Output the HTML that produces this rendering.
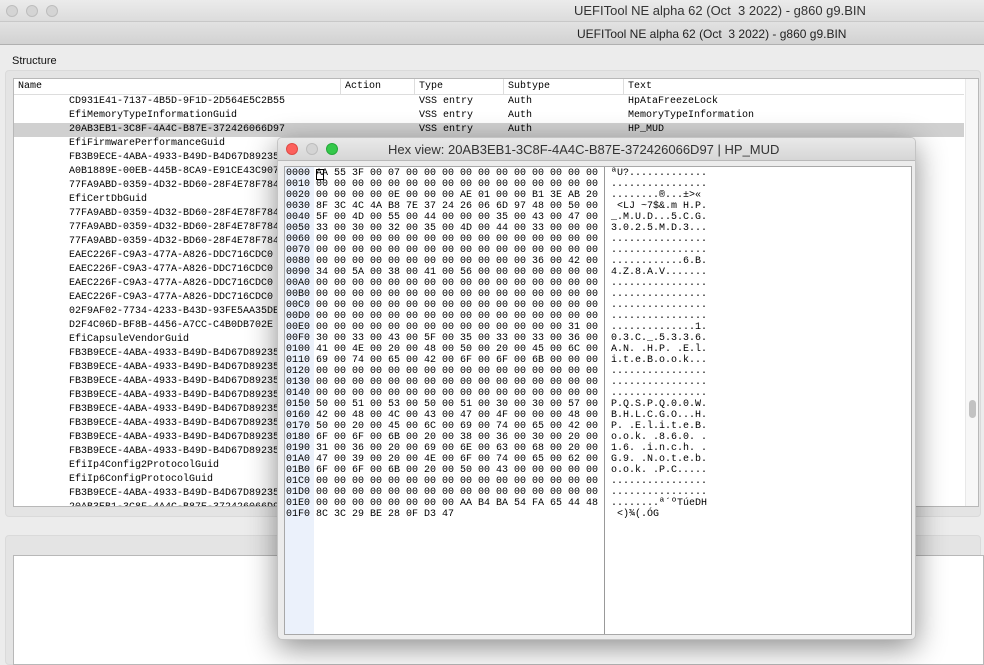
<!DOCTYPE html>
<html><head><meta charset="utf-8"><style>
*{margin:0;padding:0;box-sizing:border-box}
body{width:984px;height:660px;overflow:hidden;background:#ececec;font-family:"Liberation Sans",sans-serif;position:relative}
.abs{position:absolute}
.tl{position:absolute;width:12px;height:12px;border-radius:50%;background:#d4d4d4;border:1px solid #bdbdbd}
.mono{font-family:"Liberation Mono","DejaVu Sans Mono",monospace;font-size:10px;line-height:14px;white-space:pre;color:#000}
.row{position:absolute;left:0;right:0;height:14px}
.row span{position:absolute;top:0}
.hdr span{position:absolute;top:0}
pre{font-family:"Liberation Mono","DejaVu Sans Mono",monospace;font-size:10px;line-height:11px;color:#000;margin:0}
</style></head><body>
<div class="abs" style="left:0;top:0;width:984px;height:22px;background:linear-gradient(#ebebeb,#dcdcdc);border-bottom:1px solid #c8c8c8"></div>
<div class="tl" style="left:6px;top:5px"></div><div class="tl" style="left:26px;top:5px"></div><div class="tl" style="left:46px;top:5px"></div>
<div class="abs" style="left:574px;top:3px;font-size:13px;color:#333">UEFITool NE alpha 62 (Oct&nbsp;&nbsp;3 2022) - g860 g9.BIN</div>
<div class="abs" style="left:0;top:22px;width:984px;height:23px;background:linear-gradient(#e2e2e2,#d2d2d2);border-bottom:1px solid #b0b0b0"></div>
<div class="abs" style="left:577px;top:27px;font-size:12px;color:#222">UEFITool NE alpha 62 (Oct&nbsp;&nbsp;3 2022) - g860 g9.BIN</div>
<div class="abs" style="left:12px;top:55px;font-size:11px;color:#111">Structure</div>
<div class="abs" style="left:5px;top:70px;width:976px;height:447px;background:#e4e4e4;border-radius:4px;border:1px solid #dadada"></div>
<div class="abs" style="left:13px;top:78px;width:966px;height:429px;background:#fff;border:1px solid #b8b8b8;overflow:hidden">
 <div class="mono hdr" style="position:absolute;left:0;top:0;width:950px;height:16px;border-bottom:1px solid #ddd;line-height:15px"><span style="left:4px">Name</span><span style="left:326px;border-left:1px solid #ddd;padding-left:4px">Action</span><span style="left:400px;border-left:1px solid #ddd;padding-left:4px">Type</span><span style="left:489px;border-left:1px solid #ddd;padding-left:4px">Subtype</span><span style="left:609px;border-left:1px solid #ddd;padding-left:4px">Text</span></div>
 <div class="mono" style="position:absolute;left:0;top:16px;width:950px">
  <div class="row" style="top:0"><span style="left:55px">CD931E41-7137-4B5D-9F1D-2D564E5C2B55</span><span style="left:405px">VSS entry</span><span style="left:494px">Auth</span><span style="left:614px">HpAtaFreezeLock</span></div>
  <div class="row" style="top:14px"><span style="left:55px">EfiMemoryTypeInformationGuid</span><span style="left:405px">VSS entry</span><span style="left:494px">Auth</span><span style="left:614px">MemoryTypeInformation</span></div>
  <div class="row" style="top:28px;background:#d0d0d0"><span style="left:55px">20AB3EB1-3C8F-4A4C-B87E-372426066D97</span><span style="left:405px">VSS entry</span><span style="left:494px">Auth</span><span style="left:614px">HP_MUD</span></div>
  <div class="row" style="top:42px"><span style="left:55px">EfiFirmwarePerformanceGuid</span></div>
  <div class="row" style="top:56px"><span style="left:55px">FB3B9ECE-4ABA-4933-B49D-B4D67D89235</span></div>
  <div class="row" style="top:70px"><span style="left:55px">A0B1889E-00EB-445B-8CA9-E91CE43C907</span></div>
  <div class="row" style="top:84px"><span style="left:55px">77FA9ABD-0359-4D32-BD60-28F4E78F784</span></div>
  <div class="row" style="top:98px"><span style="left:55px">EfiCertDbGuid</span></div>
  <div class="row" style="top:112px"><span style="left:55px">77FA9ABD-0359-4D32-BD60-28F4E78F784</span></div>
  <div class="row" style="top:126px"><span style="left:55px">77FA9ABD-0359-4D32-BD60-28F4E78F784</span></div>
  <div class="row" style="top:140px"><span style="left:55px">77FA9ABD-0359-4D32-BD60-28F4E78F784</span></div>
  <div class="row" style="top:154px"><span style="left:55px">EAEC226F-C9A3-477A-A826-DDC716CDC0</span></div>
  <div class="row" style="top:168px"><span style="left:55px">EAEC226F-C9A3-477A-A826-DDC716CDC0</span></div>
  <div class="row" style="top:182px"><span style="left:55px">EAEC226F-C9A3-477A-A826-DDC716CDC0</span></div>
  <div class="row" style="top:196px"><span style="left:55px">EAEC226F-C9A3-477A-A826-DDC716CDC0</span></div>
  <div class="row" style="top:210px"><span style="left:55px">02F9AF02-7734-4233-B43D-93FE5AA35DE</span></div>
  <div class="row" style="top:224px"><span style="left:55px">D2F4C06D-BF8B-4456-A7CC-C4B0DB702E</span></div>
  <div class="row" style="top:238px"><span style="left:55px">EfiCapsuleVendorGuid</span></div>
  <div class="row" style="top:252px"><span style="left:55px">FB3B9ECE-4ABA-4933-B49D-B4D67D89235</span></div>
  <div class="row" style="top:266px"><span style="left:55px">FB3B9ECE-4ABA-4933-B49D-B4D67D89235</span></div>
  <div class="row" style="top:280px"><span style="left:55px">FB3B9ECE-4ABA-4933-B49D-B4D67D89235</span></div>
  <div class="row" style="top:294px"><span style="left:55px">FB3B9ECE-4ABA-4933-B49D-B4D67D89235</span></div>
  <div class="row" style="top:308px"><span style="left:55px">FB3B9ECE-4ABA-4933-B49D-B4D67D89235</span></div>
  <div class="row" style="top:322px"><span style="left:55px">FB3B9ECE-4ABA-4933-B49D-B4D67D89235</span></div>
  <div class="row" style="top:336px"><span style="left:55px">FB3B9ECE-4ABA-4933-B49D-B4D67D89235</span></div>
  <div class="row" style="top:350px"><span style="left:55px">FB3B9ECE-4ABA-4933-B49D-B4D67D89235</span></div>
  <div class="row" style="top:364px"><span style="left:55px">EfiIp4Config2ProtocolGuid</span></div>
  <div class="row" style="top:378px"><span style="left:55px">EfiIp6ConfigProtocolGuid</span></div>
  <div class="row" style="top:392px"><span style="left:55px">FB3B9ECE-4ABA-4933-B49D-B4D67D89235</span></div>
  <div class="row" style="top:406px"><span style="left:55px">20AB3EB1-3C8F-4A4C-B87E-372426066D97</span></div>
 </div>
 <div class="abs" style="left:951px;top:0;width:14px;height:429px;background:#f7f7f7;border-left:1px solid #e8e8e8"></div>
 <div class="abs" style="left:955px;top:321px;width:7px;height:18px;border-radius:4px;background:#c2c2c2"></div>
</div>
<div class="abs" style="left:5px;top:535px;width:976px;height:130px;background:#e4e4e4;border-radius:4px;border:1px solid #dadada"></div>
<div class="abs" style="left:13px;top:555px;width:971px;height:110px;background:#fff;border:1px solid #b8b8b8"></div>

<!-- Hex window -->
<div class="abs" style="left:277px;top:137px;width:639px;height:503px;background:#ececec;border:1px solid #c4c4c4;border-radius:5px;box-shadow:0 8px 30px rgba(0,0,0,0.45);overflow:hidden">
 <div class="abs" style="left:0;top:0;width:639px;height:23px;background:linear-gradient(#e9e9e9,#d6d6d6);border-bottom:1px solid #b9b9b9"></div>
 <div class="tl" style="left:8px;top:5px;background:#fc605c;border-color:#de4a45"></div>
 <div class="tl" style="left:28px;top:5px"></div>
 <div class="tl" style="left:48px;top:5px;background:#34c84a;border-color:#25a83a"></div>
 <div class="abs" style="left:110px;top:4px;font-size:13px;color:#333">Hex view: 20AB3EB1-3C8F-4A4C-B87E-372426066D97 | HP_MUD</div>
 <div class="abs" style="left:6px;top:28px;width:628px;height:469px;background:#fff;border:1px solid #a8a8a8"></div>
 <div class="abs" style="left:7px;top:29px;width:29px;height:467px;background:#ebf1fb"></div>
 <div class="abs" style="left:326px;top:29px;width:1px;height:467px;background:#999"></div>
 <div class="abs" style="left:38px;top:31px;width:8px;height:11px;border:1px solid #000"></div>
<pre class="abs" style="left:8px;top:30px">0000 AA 55 3F 00 07 00 00 00 00 00 00 00 00 00 00 00
0010 00 00 00 00 00 00 00 00 00 00 00 00 00 00 00 00
0020 00 00 00 00 0E 00 00 00 AE 01 00 00 B1 3E AB 20
0030 8F 3C 4C 4A B8 7E 37 24 26 06 6D 97 48 00 50 00
0040 5F 00 4D 00 55 00 44 00 00 00 35 00 43 00 47 00
0050 33 00 30 00 32 00 35 00 4D 00 44 00 33 00 00 00
0060 00 00 00 00 00 00 00 00 00 00 00 00 00 00 00 00
0070 00 00 00 00 00 00 00 00 00 00 00 00 00 00 00 00
0080 00 00 00 00 00 00 00 00 00 00 00 00 36 00 42 00
0090 34 00 5A 00 38 00 41 00 56 00 00 00 00 00 00 00
00A0 00 00 00 00 00 00 00 00 00 00 00 00 00 00 00 00
00B0 00 00 00 00 00 00 00 00 00 00 00 00 00 00 00 00
00C0 00 00 00 00 00 00 00 00 00 00 00 00 00 00 00 00
00D0 00 00 00 00 00 00 00 00 00 00 00 00 00 00 00 00
00E0 00 00 00 00 00 00 00 00 00 00 00 00 00 00 31 00
00F0 30 00 33 00 43 00 5F 00 35 00 33 00 33 00 36 00
0100 41 00 4E 00 20 00 48 00 50 00 20 00 45 00 6C 00
0110 69 00 74 00 65 00 42 00 6F 00 6F 00 6B 00 00 00
0120 00 00 00 00 00 00 00 00 00 00 00 00 00 00 00 00
0130 00 00 00 00 00 00 00 00 00 00 00 00 00 00 00 00
0140 00 00 00 00 00 00 00 00 00 00 00 00 00 00 00 00
0150 50 00 51 00 53 00 50 00 51 00 30 00 30 00 57 00
0160 42 00 48 00 4C 00 43 00 47 00 4F 00 00 00 48 00
0170 50 00 20 00 45 00 6C 00 69 00 74 00 65 00 42 00
0180 6F 00 6F 00 6B 00 20 00 38 00 36 00 30 00 20 00
0190 31 00 36 00 20 00 69 00 6E 00 63 00 68 00 20 00
01A0 47 00 39 00 20 00 4E 00 6F 00 74 00 65 00 62 00
01B0 6F 00 6F 00 6B 00 20 00 50 00 43 00 00 00 00 00
01C0 00 00 00 00 00 00 00 00 00 00 00 00 00 00 00 00
01D0 00 00 00 00 00 00 00 00 00 00 00 00 00 00 00 00
01E0 00 00 00 00 00 00 00 00 AA B4 BA 54 FA 65 44 48
01F0 8C 3C 29 BE 28 0F D3 47</pre>
<pre class="abs" style="left:333px;top:30px">ªU?.............
................
........®...±&gt;«
 &lt;LJ ~7$&amp;.m H.P.
_.M.U.D...5.C.G.
3.0.2.5.M.D.3...
................
................
............6.B.
4.Z.8.A.V.......
................
................
................
................
..............1.
0.3.C._.5.3.3.6.
A.N. .H.P. .E.l.
i.t.e.B.o.o.k...
................
................
................
P.Q.S.P.Q.0.0.W.
B.H.L.C.G.O...H.
P. .E.l.i.t.e.B.
o.o.k. .8.6.0. .
1.6. .i.n.c.h. .
G.9. .N.o.t.e.b.
o.o.k. .P.C.....
................
................
........ª´ºTúeDH
 &lt;)¾(.ÓG</pre>
</div>
</body></html>
